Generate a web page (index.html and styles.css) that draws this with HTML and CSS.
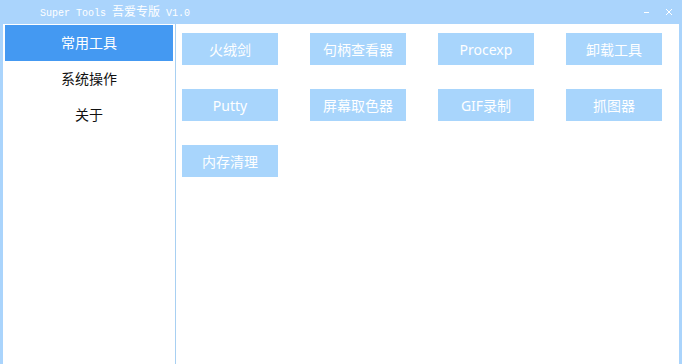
FILE: index.html
```html
<!DOCTYPE html>
<html lang="zh-CN">
<head>
    <meta charset="UTF-8">
    <title>Super Tools</title>
    <link rel="stylesheet" href="styles.css">
</head>
<body>
    <div class="window">
        <div class="titlebar">
            <span class="title">Super Tools <span class="cjk">吾爱专版</span> V1.0</span>
            <div class="controls">
                <svg class="ctl" width="8" height="8" viewBox="0 0 8 8"><line x1="1" y1="4.5" x2="6" y2="4.5" stroke="#fff" stroke-width="1"/></svg>
                <svg class="ctl" width="8" height="8" viewBox="0 0 8 8"><path d="M1 1 L7 7 M7 1 L1 7" stroke="#fff" stroke-width="1"/></svg>
            </div>
        </div>
        <div class="body">
            <div class="sidebar">
                <div class="nav active">常用工具</div>
                <div class="nav">系统操作</div>
                <div class="nav">关于</div>
            </div>
            <div class="main">
                <button class="tool">火绒剑</button>
                <button class="tool">句柄查看器</button>
                <button class="tool">Procexp</button>
                <button class="tool">卸载工具</button>
                <button class="tool">Putty</button>
                <button class="tool">屏幕取色器</button>
                <button class="tool">GIF录制</button>
                <button class="tool">抓图器</button>
                <button class="tool">内存清理</button>
            </div>
        </div>
    </div>
</body>
</html>
```

FILE: styles.css
```css
body {
    margin: 0;
    background: white;
    font-family: "Noto Sans", "Noto Sans CJK SC", sans-serif;
}
.window {
    width: 682px;
    height: 364px;
    background: #aad4fc;
    display: flex;
    flex-direction: column;
}
.titlebar {
    height: 24px;
    display: flex;
    align-items: center;
    justify-content: space-between;
    color: white;
}
.title {
    margin-left: 40px;
    font-family: "Liberation Mono", "Noto Sans CJK SC", monospace;
    font-size: 10px;
    line-height: 24px;
}
.title .cjk {
    font-family: "Noto Sans CJK SC", sans-serif;
    font-size: 12px;
}
.controls {
    display: flex;
    gap: 14px;
    margin-right: 9px;
    margin-top: -1px;
}
.ctl {
    display: block;
}
.body {
    flex: 1;
    margin: 0 3px;
    background: white;
    display: flex;
}
.sidebar {
    width: 168px;
    margin: 1px 2px 0 2px;
}
.nav {
    height: 36px;
    line-height: 36px;
    text-align: center;
    font-size: 14px;
    color: #111;
}
.nav.active {
    background: #4499f2;
    color: white;
}
.main {
    flex: 1;
    border-left: 1px solid #a8d0f2;
    padding: 9px 6px;
    display: grid;
    grid-template-columns: repeat(4, 96px);
    grid-auto-rows: 32px;
    column-gap: 32px;
    row-gap: 24px;
    align-content: start;
}
.tool {
    border: none;
    background: #a8d5fc;
    color: white;
    font-family: "Noto Sans", "Noto Sans CJK SC", sans-serif;
    font-size: 14px;
    padding: 0;
}
```
